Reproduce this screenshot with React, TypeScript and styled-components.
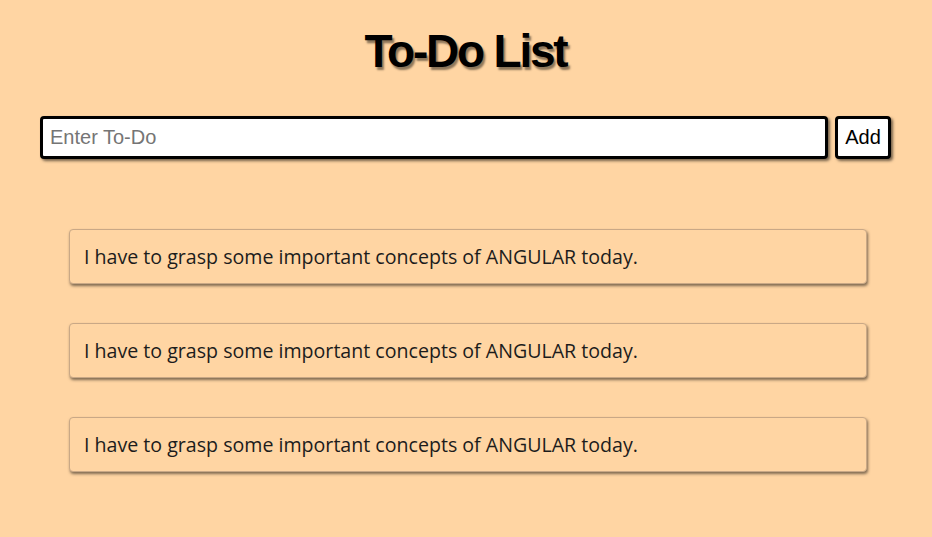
import React from "react";
import styled, { createGlobalStyle } from "styled-components";

const Global = createGlobalStyle`
  html, body { margin: 0; padding: 0; background: #ffd5a3; }
  body { font-family: "Liberation Sans", Arial, sans-serif; }
`;

const Page = styled.div`
  display: flex;
  flex-direction: column;
  align-items: stretch;
  padding: 24px 41px 30px 40px;
  width: 932px;
  box-sizing: border-box;
`;

const Title = styled.h1`
  margin: 0;
  text-align: center;
  font-family: "Liberation Sans", Arial, sans-serif;
  font-size: 46px;
  font-weight: 700;
  letter-spacing: -2.2px;
  line-height: 54px;
  color: #000;
  text-shadow: 2px 3px 2px rgba(0, 0, 0, 0.45);
`;

const Form = styled.div`
  display: flex;
  gap: 7px;
  margin-top: 38px;
`;

const Input = styled.input`
  flex: 1;
  height: 43px;
  box-sizing: border-box;
  border: 3px solid #000;
  border-radius: 4px;
  padding: 0 7px;
  font-family: "Liberation Sans", Arial, sans-serif;
  font-size: 20px;
  background: #fff;
  box-shadow: 2px 2px 3px rgba(0, 0, 0, 0.55);
  outline: none;
  &::placeholder { color: #757575; }
`;

const AddButton = styled.button`
  width: 56px;
  height: 43px;
  box-sizing: border-box;
  border: 3px solid #000;
  border-radius: 4px;
  background: #fff;
  font-family: "Liberation Sans", Arial, sans-serif;
  font-size: 20px;
  color: #000;
  padding: 0;
  box-shadow: 2px 2px 3px rgba(0, 0, 0, 0.55);
`;

const List = styled.div`
  display: flex;
  flex-direction: column;
  gap: 39px;
  margin-top: 70px;
  padding: 0 24px 0 29px;
`;

const Card = styled.div`
  height: 55px;
  box-sizing: border-box;
  display: flex;
  align-items: center;
  padding: 0 14px;
  background: #ffd5a3;
  border: 1px solid #c9a886;
  border-radius: 4px;
  box-shadow: 1px 2px 3px rgba(0, 0, 0, 0.5);
  font-family: "Open Sans", "Noto Sans", sans-serif;
  font-size: 19.6px;
  color: #1c1c1c;
`;

const todos = [
  "I have to grasp some important concepts of ANGULAR today.",
  "I have to grasp some important concepts of ANGULAR today.",
  "I have to grasp some important concepts of ANGULAR today.",
];

export default function App() {
  return (
    <>
      <Global />
      <Page>
        <Title>To-Do List</Title>
        <Form>
          <Input placeholder="Enter To-Do" />
          <AddButton>Add</AddButton>
        </Form>
        <List>
          {todos.map((t, i) => (
            <Card key={i}>{t}</Card>
          ))}
        </List>
      </Page>
    </>
  );
}
